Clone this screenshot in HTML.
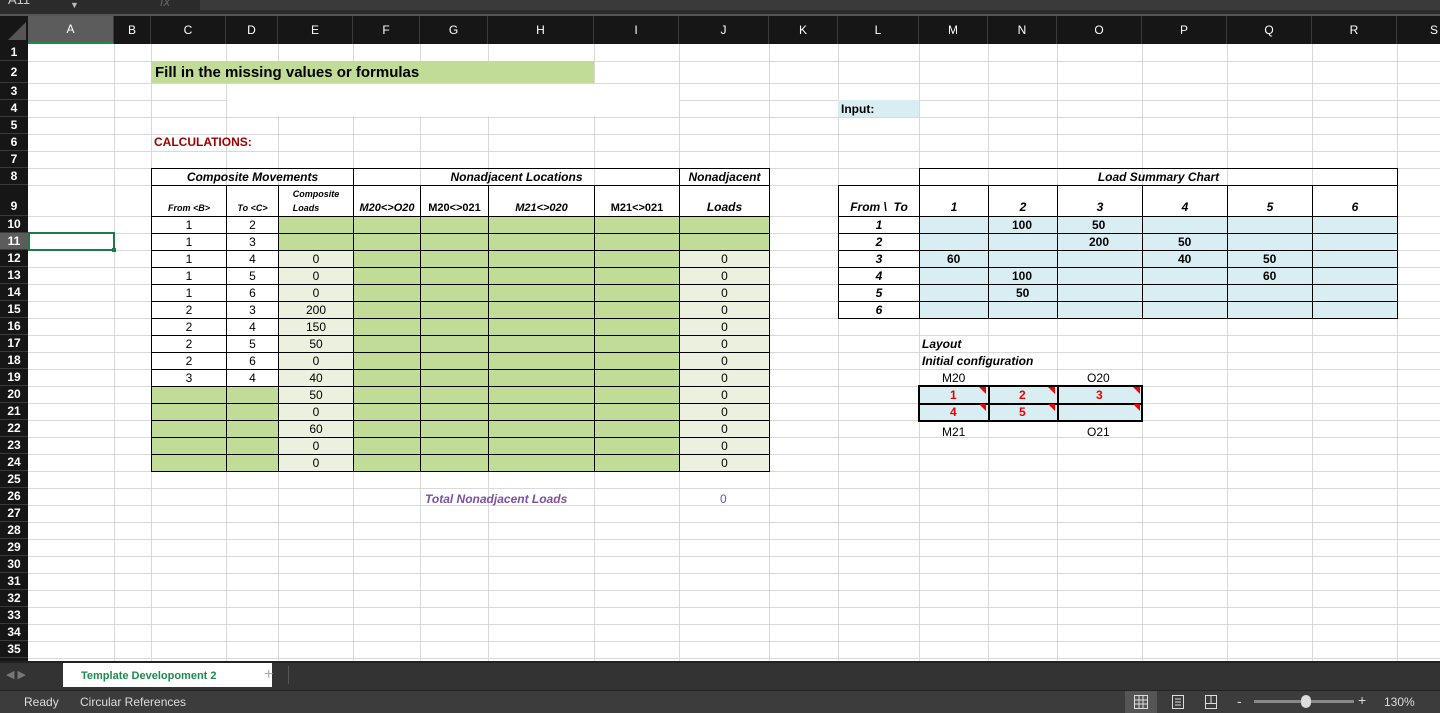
<!DOCTYPE html>
<html><head><meta charset="utf-8"><style>
*{margin:0;padding:0;box-sizing:border-box}
body{width:1440px;height:713px;overflow:hidden;background:#fff;font-family:"Liberation Sans",Arial,sans-serif;position:relative;font-size:12px;color:#000}
.a{position:absolute}
.v{position:absolute;top:44px;height:620px;width:1px;background:#d9d9d9}
.h{position:absolute;left:28px;width:1412px;height:1px;background:#d9d9d9}
.c{position:absolute;display:flex;align-items:center;justify-content:center;border:1px solid #000;font-size:12px;white-space:nowrap}
.g{background:#c0dc96}.lg{background:#ebf1de}.lb{background:#d9eef3}
.bi{font-weight:bold;font-style:italic}.b{font-weight:bold}
.ch{position:absolute;top:16px;height:28px;color:#fff;font-size:12px;display:flex;align-items:center;justify-content:center;border-right:1px solid #3a3a3a}
.rh{position:absolute;left:0;width:28px;height:17px;color:#fff;font-weight:bold;font-size:12px;display:flex;align-items:center;justify-content:center;border-bottom:1px solid #3a3a3a}
.t{position:absolute;white-space:nowrap}
.tri{position:absolute;width:0;height:0;border-top:7px solid #e00;border-left:7px solid transparent}
</style></head><body>
<!-- formula bar -->
<div class="a" style="left:0;top:0;width:1440px;height:16px;background:#2b2b2b"></div>
<div class="t" style="left:8px;top:-8px;color:#ccc;font-size:13px">A11</div>
<div class="t" style="left:70px;top:0;color:#bbb;font-size:9px">▼</div>
<div class="a" style="left:200px;top:0;width:1240px;height:10px;background:#3a3a3a"></div>
<div class="t" style="left:160px;top:-6px;color:#666;font-size:13px;font-style:italic">fx</div>
<!-- column headers -->
<div class="a" style="left:0;top:14px;width:1440px;height:30px;background:#161616;border-top:2px solid #555"></div>
<div class="a" style="left:8px;top:22px;width:0;height:0;border-bottom:18px solid #555;border-left:18px solid transparent"></div>
<div class="ch" style="left:28px;width:86px;background:#5c5c5c;border-bottom:2px solid #1e8a4c">A</div>
<div class="ch" style="left:114px;width:37px">B</div>
<div class="ch" style="left:151px;width:75px">C</div>
<div class="ch" style="left:226px;width:52px">D</div>
<div class="ch" style="left:278px;width:75px">E</div>
<div class="ch" style="left:353px;width:67px">F</div>
<div class="ch" style="left:420px;width:68px">G</div>
<div class="ch" style="left:488px;width:106px">H</div>
<div class="ch" style="left:594px;width:85px">I</div>
<div class="ch" style="left:679px;width:90px">J</div>
<div class="ch" style="left:769px;width:69px">K</div>
<div class="ch" style="left:838px;width:81px">L</div>
<div class="ch" style="left:919px;width:69px">M</div>
<div class="ch" style="left:988px;width:69px">N</div>
<div class="ch" style="left:1057px;width:85px">O</div>
<div class="ch" style="left:1142px;width:85px">P</div>
<div class="ch" style="left:1227px;width:85px">Q</div>
<div class="ch" style="left:1312px;width:85px">R</div>
<div class="ch" style="left:1397px;width:80px;justify-content:flex-end;padding-right:38px">S</div>
<!-- row headers -->
<div class="a" style="left:0;top:44px;width:28px;height:620px;background:#161616"></div>
<div class="rh" style="top:44px">1</div><div class="rh" style="top:61px;height:22px">2</div>
<div class="rh" style="top:83px">3</div><div class="rh" style="top:100px">4</div><div class="rh" style="top:117px">5</div>
<div class="rh" style="top:134px">6</div><div class="rh" style="top:151px">7</div><div class="rh" style="top:168px">8</div>
<div class="rh" style="top:185px;height:31px;align-items:flex-end;padding-bottom:2px">9</div>
<div class="rh" style="top:216px">10</div><div class="rh" style="top:233px;background:#5c5c5c">11</div><div class="rh" style="top:250px">12</div>
<div class="rh" style="top:267px">13</div><div class="rh" style="top:284px">14</div><div class="rh" style="top:301px">15</div>
<div class="rh" style="top:318px">16</div><div class="rh" style="top:335px">17</div><div class="rh" style="top:352px">18</div>
<div class="rh" style="top:369px">19</div><div class="rh" style="top:386px">20</div><div class="rh" style="top:403px">21</div>
<div class="rh" style="top:420px">22</div><div class="rh" style="top:437px">23</div><div class="rh" style="top:454px">24</div>
<div class="rh" style="top:471px">25</div><div class="rh" style="top:488px">26</div><div class="rh" style="top:505px">27</div>
<div class="rh" style="top:522px">28</div><div class="rh" style="top:539px">29</div><div class="rh" style="top:556px">30</div>
<div class="rh" style="top:573px">31</div><div class="rh" style="top:590px">32</div><div class="rh" style="top:607px">33</div>
<div class="rh" style="top:624px">34</div><div class="rh" style="top:641px">35</div>
<!-- gridlines vertical -->
<div class="v" style="left:114px"></div><div class="v" style="left:151px"></div><div class="v" style="left:226px"></div>
<div class="v" style="left:278px"></div><div class="v" style="left:353px"></div><div class="v" style="left:420px"></div>
<div class="v" style="left:488px"></div><div class="v" style="left:594px"></div><div class="v" style="left:679px"></div>
<div class="v" style="left:769px"></div><div class="v" style="left:838px"></div><div class="v" style="left:919px"></div>
<div class="v" style="left:988px"></div><div class="v" style="left:1057px"></div><div class="v" style="left:1142px"></div>
<div class="v" style="left:1227px"></div><div class="v" style="left:1312px"></div><div class="v" style="left:1397px"></div>
<!-- horizontal -->
<div class="h" style="top:61px"></div><div class="h" style="top:83px"></div><div class="h" style="top:100px"></div>
<div class="h" style="top:117px"></div><div class="h" style="top:134px"></div><div class="h" style="top:151px"></div>
<div class="h" style="top:168px"></div><div class="h" style="top:185px"></div><div class="h" style="top:216px"></div>
<div class="h" style="top:233px"></div><div class="h" style="top:250px"></div><div class="h" style="top:267px"></div>
<div class="h" style="top:284px"></div><div class="h" style="top:301px"></div><div class="h" style="top:318px"></div>
<div class="h" style="top:335px"></div><div class="h" style="top:352px"></div><div class="h" style="top:369px"></div>
<div class="h" style="top:386px"></div><div class="h" style="top:403px"></div><div class="h" style="top:420px"></div>
<div class="h" style="top:437px"></div><div class="h" style="top:454px"></div><div class="h" style="top:471px"></div>
<div class="h" style="top:488px"></div><div class="h" style="top:505px"></div><div class="h" style="top:522px"></div>
<div class="h" style="top:539px"></div><div class="h" style="top:556px"></div><div class="h" style="top:573px"></div>
<div class="h" style="top:590px"></div><div class="h" style="top:607px"></div><div class="h" style="top:624px"></div>
<div class="h" style="top:641px"></div><div class="h" style="top:658px"></div>
<!-- white blank region -->
<div class="a" style="left:227px;top:84px;width:452px;height:32px;background:#fff"></div>
<!-- title -->
<div class="a g" style="left:151px;top:61px;width:443px;height:22px"></div>
<div class="t b" style="left:155px;top:64px;font-size:15px">Fill in the missing values or formulas</div>
<div class="t b" style="left:154px;top:135px;color:#a00000;font-size:12px">CALCULATIONS:</div>
<div class="a lb" style="left:838px;top:100px;width:81px;height:17px"></div>
<div class="t b" style="left:841px;top:102px">Input:</div>
<!-- main table headers -->
<div class="c bi" style="left:151px;top:168px;width:203px;height:18px">Composite Movements</div>
<div class="c bi" style="left:353px;top:168px;width:327px;height:18px">Nonadjacent Locations</div>
<div class="c bi" style="left:679px;top:168px;width:91px;height:18px">Nonadjacent</div>
<div class="c bi" style="left:151px;top:185px;width:76px;height:32px;font-size:9px;align-items:flex-end;padding-bottom:3px">From &lt;B&gt;</div>
<div class="c bi" style="left:226px;top:185px;width:53px;height:32px;font-size:9px;align-items:flex-end;padding-bottom:3px">To &lt;C&gt;</div>
<div class="c bi" style="left:278px;top:185px;width:76px;height:32px;font-size:9px;flex-direction:column;line-height:14px">Composite<br>Loads</div>
<div class="c bi" style="left:353px;top:185px;width:68px;height:32px;font-size:11px;align-items:flex-end;padding-bottom:2px">M20&lt;&gt;O20</div>
<div class="c b" style="left:420px;top:185px;width:69px;height:32px;font-size:11px;align-items:flex-end;padding-bottom:2px">M20&lt;&gt;021</div>
<div class="c bi" style="left:488px;top:185px;width:107px;height:32px;font-size:11px;align-items:flex-end;padding-bottom:2px">M21&lt;&gt;020</div>
<div class="c b" style="left:594px;top:185px;width:86px;height:32px;font-size:11px;align-items:flex-end;padding-bottom:2px">M21&lt;&gt;021</div>
<div class="c bi" style="left:679px;top:185px;width:91px;height:32px;align-items:flex-end;padding-bottom:2px">Loads</div>
<!-- main table body: columns C D -->
<div class="c" style="left:151px;top:216px;width:76px;height:18px">1</div><div class="c" style="left:226px;top:216px;width:53px;height:18px">2</div>
<div class="c" style="left:151px;top:233px;width:76px;height:18px">1</div><div class="c" style="left:226px;top:233px;width:53px;height:18px">3</div>
<div class="c" style="left:151px;top:250px;width:76px;height:18px">1</div><div class="c" style="left:226px;top:250px;width:53px;height:18px">4</div>
<div class="c" style="left:151px;top:267px;width:76px;height:18px">1</div><div class="c" style="left:226px;top:267px;width:53px;height:18px">5</div>
<div class="c" style="left:151px;top:284px;width:76px;height:18px">1</div><div class="c" style="left:226px;top:284px;width:53px;height:18px">6</div>
<div class="c" style="left:151px;top:301px;width:76px;height:18px">2</div><div class="c" style="left:226px;top:301px;width:53px;height:18px">3</div>
<div class="c" style="left:151px;top:318px;width:76px;height:18px">2</div><div class="c" style="left:226px;top:318px;width:53px;height:18px">4</div>
<div class="c" style="left:151px;top:335px;width:76px;height:18px">2</div><div class="c" style="left:226px;top:335px;width:53px;height:18px">5</div>
<div class="c" style="left:151px;top:352px;width:76px;height:18px">2</div><div class="c" style="left:226px;top:352px;width:53px;height:18px">6</div>
<div class="c" style="left:151px;top:369px;width:76px;height:18px">3</div><div class="c" style="left:226px;top:369px;width:53px;height:18px">4</div>
<div class="c g" style="left:151px;top:386px;width:76px;height:18px"></div><div class="c g" style="left:226px;top:386px;width:53px;height:18px"></div>
<div class="c g" style="left:151px;top:403px;width:76px;height:18px"></div><div class="c g" style="left:226px;top:403px;width:53px;height:18px"></div>
<div class="c g" style="left:151px;top:420px;width:76px;height:18px"></div><div class="c g" style="left:226px;top:420px;width:53px;height:18px"></div>
<div class="c g" style="left:151px;top:437px;width:76px;height:18px"></div><div class="c g" style="left:226px;top:437px;width:53px;height:18px"></div>
<div class="c g" style="left:151px;top:454px;width:76px;height:18px"></div><div class="c g" style="left:226px;top:454px;width:53px;height:18px"></div>
<!-- F-I green block -->
<div class="a g" style="left:278px;top:216px;width:492px;height:35px"></div>
<div class="a g" style="left:353px;top:250px;width:327px;height:222px"></div>
<!-- E column -->
<div class="c lg" style="left:278px;top:250px;width:76px;height:18px">0</div>
<div class="c lg" style="left:278px;top:267px;width:76px;height:18px">0</div>
<div class="c lg" style="left:278px;top:284px;width:76px;height:18px">0</div>
<div class="c lg" style="left:278px;top:301px;width:76px;height:18px">200</div>
<div class="c lg" style="left:278px;top:318px;width:76px;height:18px">150</div>
<div class="c lg" style="left:278px;top:335px;width:76px;height:18px">50</div>
<div class="c lg" style="left:278px;top:352px;width:76px;height:18px">0</div>
<div class="c lg" style="left:278px;top:369px;width:76px;height:18px">40</div>
<div class="c lg" style="left:278px;top:386px;width:76px;height:18px">50</div>
<div class="c lg" style="left:278px;top:403px;width:76px;height:18px">0</div>
<div class="c lg" style="left:278px;top:420px;width:76px;height:18px">60</div>
<div class="c lg" style="left:278px;top:437px;width:76px;height:18px">0</div>
<div class="c lg" style="left:278px;top:454px;width:76px;height:18px">0</div>
<!-- J column -->
<div class="c lg" style="left:679px;top:250px;width:91px;height:18px">0</div>
<div class="c lg" style="left:679px;top:267px;width:91px;height:18px">0</div>
<div class="c lg" style="left:679px;top:284px;width:91px;height:18px">0</div>
<div class="c lg" style="left:679px;top:301px;width:91px;height:18px">0</div>
<div class="c lg" style="left:679px;top:318px;width:91px;height:18px">0</div>
<div class="c lg" style="left:679px;top:335px;width:91px;height:18px">0</div>
<div class="c lg" style="left:679px;top:352px;width:91px;height:18px">0</div>
<div class="c lg" style="left:679px;top:369px;width:91px;height:18px">0</div>
<div class="c lg" style="left:679px;top:386px;width:91px;height:18px">0</div>
<div class="c lg" style="left:679px;top:403px;width:91px;height:18px">0</div>
<div class="c lg" style="left:679px;top:420px;width:91px;height:18px">0</div>
<div class="c lg" style="left:679px;top:437px;width:91px;height:18px">0</div>
<div class="c lg" style="left:679px;top:454px;width:91px;height:18px">0</div>
<!-- grid borders for green rows/cols -->
<div class="c" style="left:278px;top:216px;width:76px;height:18px"></div><div class="c" style="left:278px;top:233px;width:76px;height:18px"></div>
<div class="c" style="left:679px;top:216px;width:91px;height:18px"></div><div class="c" style="left:679px;top:233px;width:91px;height:18px"></div>
<div class="a" style="left:353px;top:216px;width:327px;height:256px;border:1px solid #000;
background:linear-gradient(#000,#000) 66px 0/1px 100% no-repeat,linear-gradient(#000,#000) 134px 0/1px 100% no-repeat,linear-gradient(#000,#000) 240px 0/1px 100% no-repeat,repeating-linear-gradient(transparent 0 16px,#000 16px 17px)"></div>
<!-- total -->
<div class="t bi" style="left:425px;top:492px;color:#7e4fa6;font-size:12px">Total Nonadjacent Loads</div>
<div class="t" style="left:720px;top:492px;color:#7e4fa6">0</div>
<!-- Load summary chart -->
<div class="c bi" style="left:919px;top:168px;width:479px;height:18px">Load Summary Chart</div>
<div class="c bi" style="left:838px;top:185px;width:82px;height:32px;align-items:flex-end;padding-bottom:2px">From \&nbsp; To</div>
<div class="c bi" style="left:919px;top:185px;width:70px;height:32px;align-items:flex-end;padding-bottom:2px">1</div>
<div class="c bi" style="left:988px;top:185px;width:70px;height:32px;align-items:flex-end;padding-bottom:2px">2</div>
<div class="c bi" style="left:1057px;top:185px;width:86px;height:32px;align-items:flex-end;padding-bottom:2px">3</div>
<div class="c bi" style="left:1142px;top:185px;width:86px;height:32px;align-items:flex-end;padding-bottom:2px">4</div>
<div class="c bi" style="left:1227px;top:185px;width:86px;height:32px;align-items:flex-end;padding-bottom:2px">5</div>
<div class="c bi" style="left:1312px;top:185px;width:86px;height:32px;align-items:flex-end;padding-bottom:2px">6</div>
<div class="c bi" style="left:838px;top:216px;width:82px;height:18px">1</div>
<div class="c bi" style="left:838px;top:233px;width:82px;height:18px">2</div>
<div class="c bi" style="left:838px;top:250px;width:82px;height:18px">3</div>
<div class="c bi" style="left:838px;top:267px;width:82px;height:18px">4</div>
<div class="c bi" style="left:838px;top:284px;width:82px;height:18px">5</div>
<div class="c bi" style="left:838px;top:301px;width:82px;height:18px">6</div>
<div class="a lb" style="left:919px;top:216px;width:479px;height:103px;border:1px solid #000;
background:linear-gradient(#000,#000) 68px 0/1px 100% no-repeat,linear-gradient(#000,#000) 137px 0/1px 100% no-repeat,linear-gradient(#000,#000) 222px 0/1px 100% no-repeat,linear-gradient(#000,#000) 307px 0/1px 100% no-repeat,linear-gradient(#000,#000) 392px 0/1px 100% no-repeat,repeating-linear-gradient(#d9eef3 0 16px,#000 16px 17px)"></div>
<div class="t b" style="left:1012px;top:218px">100</div><div class="t b" style="left:1092px;top:218px">50</div>
<div class="t b" style="left:1089px;top:235px">200</div><div class="t b" style="left:1178px;top:235px">50</div>
<div class="t b" style="left:947px;top:252px">60</div><div class="t b" style="left:1178px;top:252px">40</div><div class="t b" style="left:1263px;top:252px">50</div>
<div class="t b" style="left:1012px;top:269px">100</div><div class="t b" style="left:1263px;top:269px">60</div>
<div class="t b" style="left:1016px;top:286px">50</div>
<!-- layout -->
<div class="t bi" style="left:922px;top:337px">Layout</div>
<div class="t bi" style="left:922px;top:354px">Initial configuration</div>
<div class="t" style="left:942px;top:371px">M20</div><div class="t" style="left:1087px;top:371px">O20</div>
<div class="t" style="left:942px;top:425px">M21</div><div class="t" style="left:1087px;top:425px">O21</div>
<div class="a lb" style="left:918px;top:385px;width:225px;height:37px;border:2px solid #000;
background:linear-gradient(#000,#000) 68px 0/2px 100% no-repeat,linear-gradient(#000,#000) 137px 0/2px 100% no-repeat,linear-gradient(#000,#000) 0 16px/100% 2px no-repeat,#d9eef3"></div>
<div class="tri" style="left:979px;top:387px"></div><div class="tri" style="left:1048px;top:387px"></div><div class="tri" style="left:1133px;top:387px"></div>
<div class="tri" style="left:979px;top:404px"></div><div class="tri" style="left:1048px;top:404px"></div><div class="tri" style="left:1133px;top:404px"></div>
<div class="t b" style="left:950px;top:388px;color:#e00">1</div><div class="t b" style="left:1019px;top:388px;color:#e00">2</div><div class="t b" style="left:1096px;top:388px;color:#e00">3</div>
<div class="t b" style="left:950px;top:405px;color:#e00">4</div><div class="t b" style="left:1019px;top:405px;color:#e00">5</div>
<!-- selection -->
<div class="a" style="left:28px;top:232px;width:87px;height:19px;border:2px solid #1e7b45"></div>
<div class="a" style="left:112px;top:248px;width:4px;height:4px;background:#1e7b45"></div>
<!-- tab bar -->
<div class="a" style="left:0;top:661px;width:1440px;height:29px;background:#333;border-top:2px solid #222"></div>
<div class="t" style="left:6px;top:668px;color:#777;font-size:11px">◀ ▶</div>
<div class="a" style="left:63px;top:663px;width:209px;height:24px;background:#fff"></div>
<div class="t b" style="left:81px;top:670px;color:#1e8a4c;font-size:11px">Template Developoment 2</div>
<div class="t" style="left:264px;top:666px;color:#aaa;font-size:16px">+</div>
<div class="a" style="left:288px;top:666px;width:1px;height:18px;background:#555"></div>
<!-- status bar -->
<div class="a" style="left:0;top:690px;width:1440px;height:23px;background:#3c3c3c;border-top:1px solid #222"></div>
<div class="t" style="left:24px;top:695px;color:#ddd;font-size:12px">Ready</div>
<div class="t" style="left:80px;top:695px;color:#ddd;font-size:12px">Circular References</div>
<div class="a" style="left:1125px;top:691px;width:32px;height:22px;background:#555"></div>
<svg class="a" style="left:1133px;top:694px" width="16" height="16" viewBox="0 0 16 16" fill="none" stroke="#ddd"><rect x="1.5" y="1.5" width="13" height="13"/><path d="M1.5 6h13M1.5 10h13M6 1.5v13M10 1.5v13"/></svg>
<svg class="a" style="left:1170px;top:694px" width="16" height="16" viewBox="0 0 16 16" fill="none" stroke="#ddd"><rect x="2.5" y="1.5" width="11" height="13"/><path d="M5 5h6M5 8h6M5 11h6"/></svg>
<svg class="a" style="left:1203px;top:694px" width="16" height="16" viewBox="0 0 16 16" fill="none" stroke="#ddd"><rect x="2.5" y="1.5" width="11" height="13"/><path d="M8 1.5v8M2.5 9.5h11"/></svg>
<div class="t" style="left:1237px;top:693px;color:#ddd;font-size:14px">-</div>
<div class="a" style="left:1254px;top:700px;width:100px;height:3px;background:#888"></div>
<div class="a" style="left:1301px;top:695px;width:10px;height:13px;border-radius:5px;background:#ddd"></div>
<div class="t" style="left:1358px;top:692px;color:#ddd;font-size:14px">+</div>
<div class="t" style="left:1384px;top:695px;color:#ddd;font-size:12px">130%</div>
</body></html>
